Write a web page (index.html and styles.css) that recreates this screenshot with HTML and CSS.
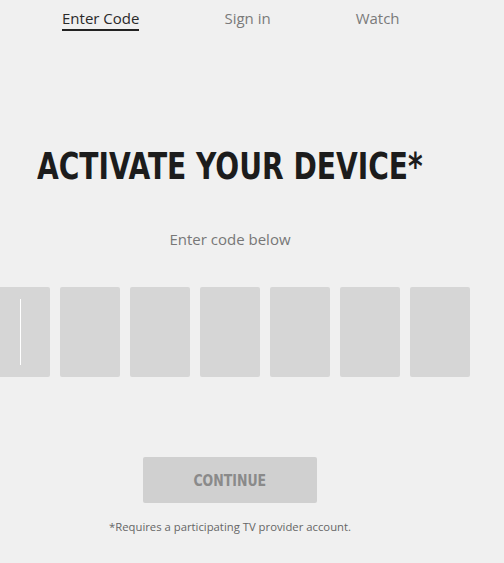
FILE: index.html
```html
<!DOCTYPE html>
<html>
<head>
<meta charset="utf-8">
<link rel="stylesheet" href="styles.css">
</head>
<body>
<nav class="tabs">
  <a class="tab active">Enter Code</a>
  <a class="tab">Sign in</a>
  <a class="tab">Watch</a>
</nav>
<main class="main">
  <h1 class="title"><span class="narrow">ACTIVATE YOUR DEVICE*</span></h1>
  <p class="hint">Enter code below</p>
  <div class="code">
    <div class="cell"><span class="caret"></span></div>
    <div class="cell"></div>
    <div class="cell"></div>
    <div class="cell"></div>
    <div class="cell"></div>
    <div class="cell"></div>
    <div class="cell"></div>
  </div>
  <div class="actions">
    <button class="continue"><span class="btn-label">CONTINUE</span></button>
    <p class="note">*Requires a participating TV provider account.</p>
  </div>
</main>
</body>
</html>
```
FILE: styles.css
```css
html, body {
  margin: 0;
  padding: 0;
  background: #f0f0f0;
}
body {
  width: 504px;
  height: 563px;
  overflow: hidden;
  font-family: "Open Sans", "Liberation Sans", sans-serif;
}
.tabs {
  display: flex;
  gap: 85px;
  padding: 8px 0 0 62px;
}
.tab {
  font-size: 15px;
  line-height: 20px;
  color: #7a7a7a;
  padding-bottom: 1px;
  border-bottom: 2px solid transparent;
}
.tab.active {
  color: #2a2a2a;
  border-bottom-color: #222;
}
.main {
  display: flex;
  flex-direction: column;
}
.title {
  margin: 113px 0 0 37px;
  font-family: "DejaVu Sans Condensed", "DejaVu Sans", sans-serif;
  font-weight: bold;
  font-size: 38px;
  line-height: 44px;
  color: #1c1c1c;
  white-space: nowrap;
}
.narrow {
  display: inline-block;
  transform: scaleX(0.822);
  transform-origin: left center;
}
.hint {
  margin: 41px 0 0;
  text-align: center;
  width: 460px;
  font-size: 15px;
  color: #777;
}
.code {
  display: flex;
  gap: 10px;
  margin: 38px 0 0 -10px;
}
.cell {
  flex: none;
  width: 60px;
  height: 90px;
  background: #d6d6d6;
  border-radius: 2px;
  position: relative;
}
.caret {
  position: absolute;
  left: 30px;
  top: 12px;
  width: 1px;
  height: 66px;
  background: #fff;
}
.actions {
  display: flex;
  flex-direction: column;
  align-items: center;
  width: 460px;
  margin-top: 80px;
}
.continue {
  width: 174px;
  height: 46px;
  border: none;
  border-radius: 2px;
  background: #d0d0d0;
  color: #8a8a8a;
  font-family: "DejaVu Sans Condensed", "DejaVu Sans", sans-serif;
  font-weight: bold;
  font-size: 16px;
  padding: 0;
}
.btn-label {
  display: inline-block;
  transform: scaleX(0.87);
}
.note {
  margin: 16px 0 0;
  font-size: 11.3px;
  color: #666;
}
```
